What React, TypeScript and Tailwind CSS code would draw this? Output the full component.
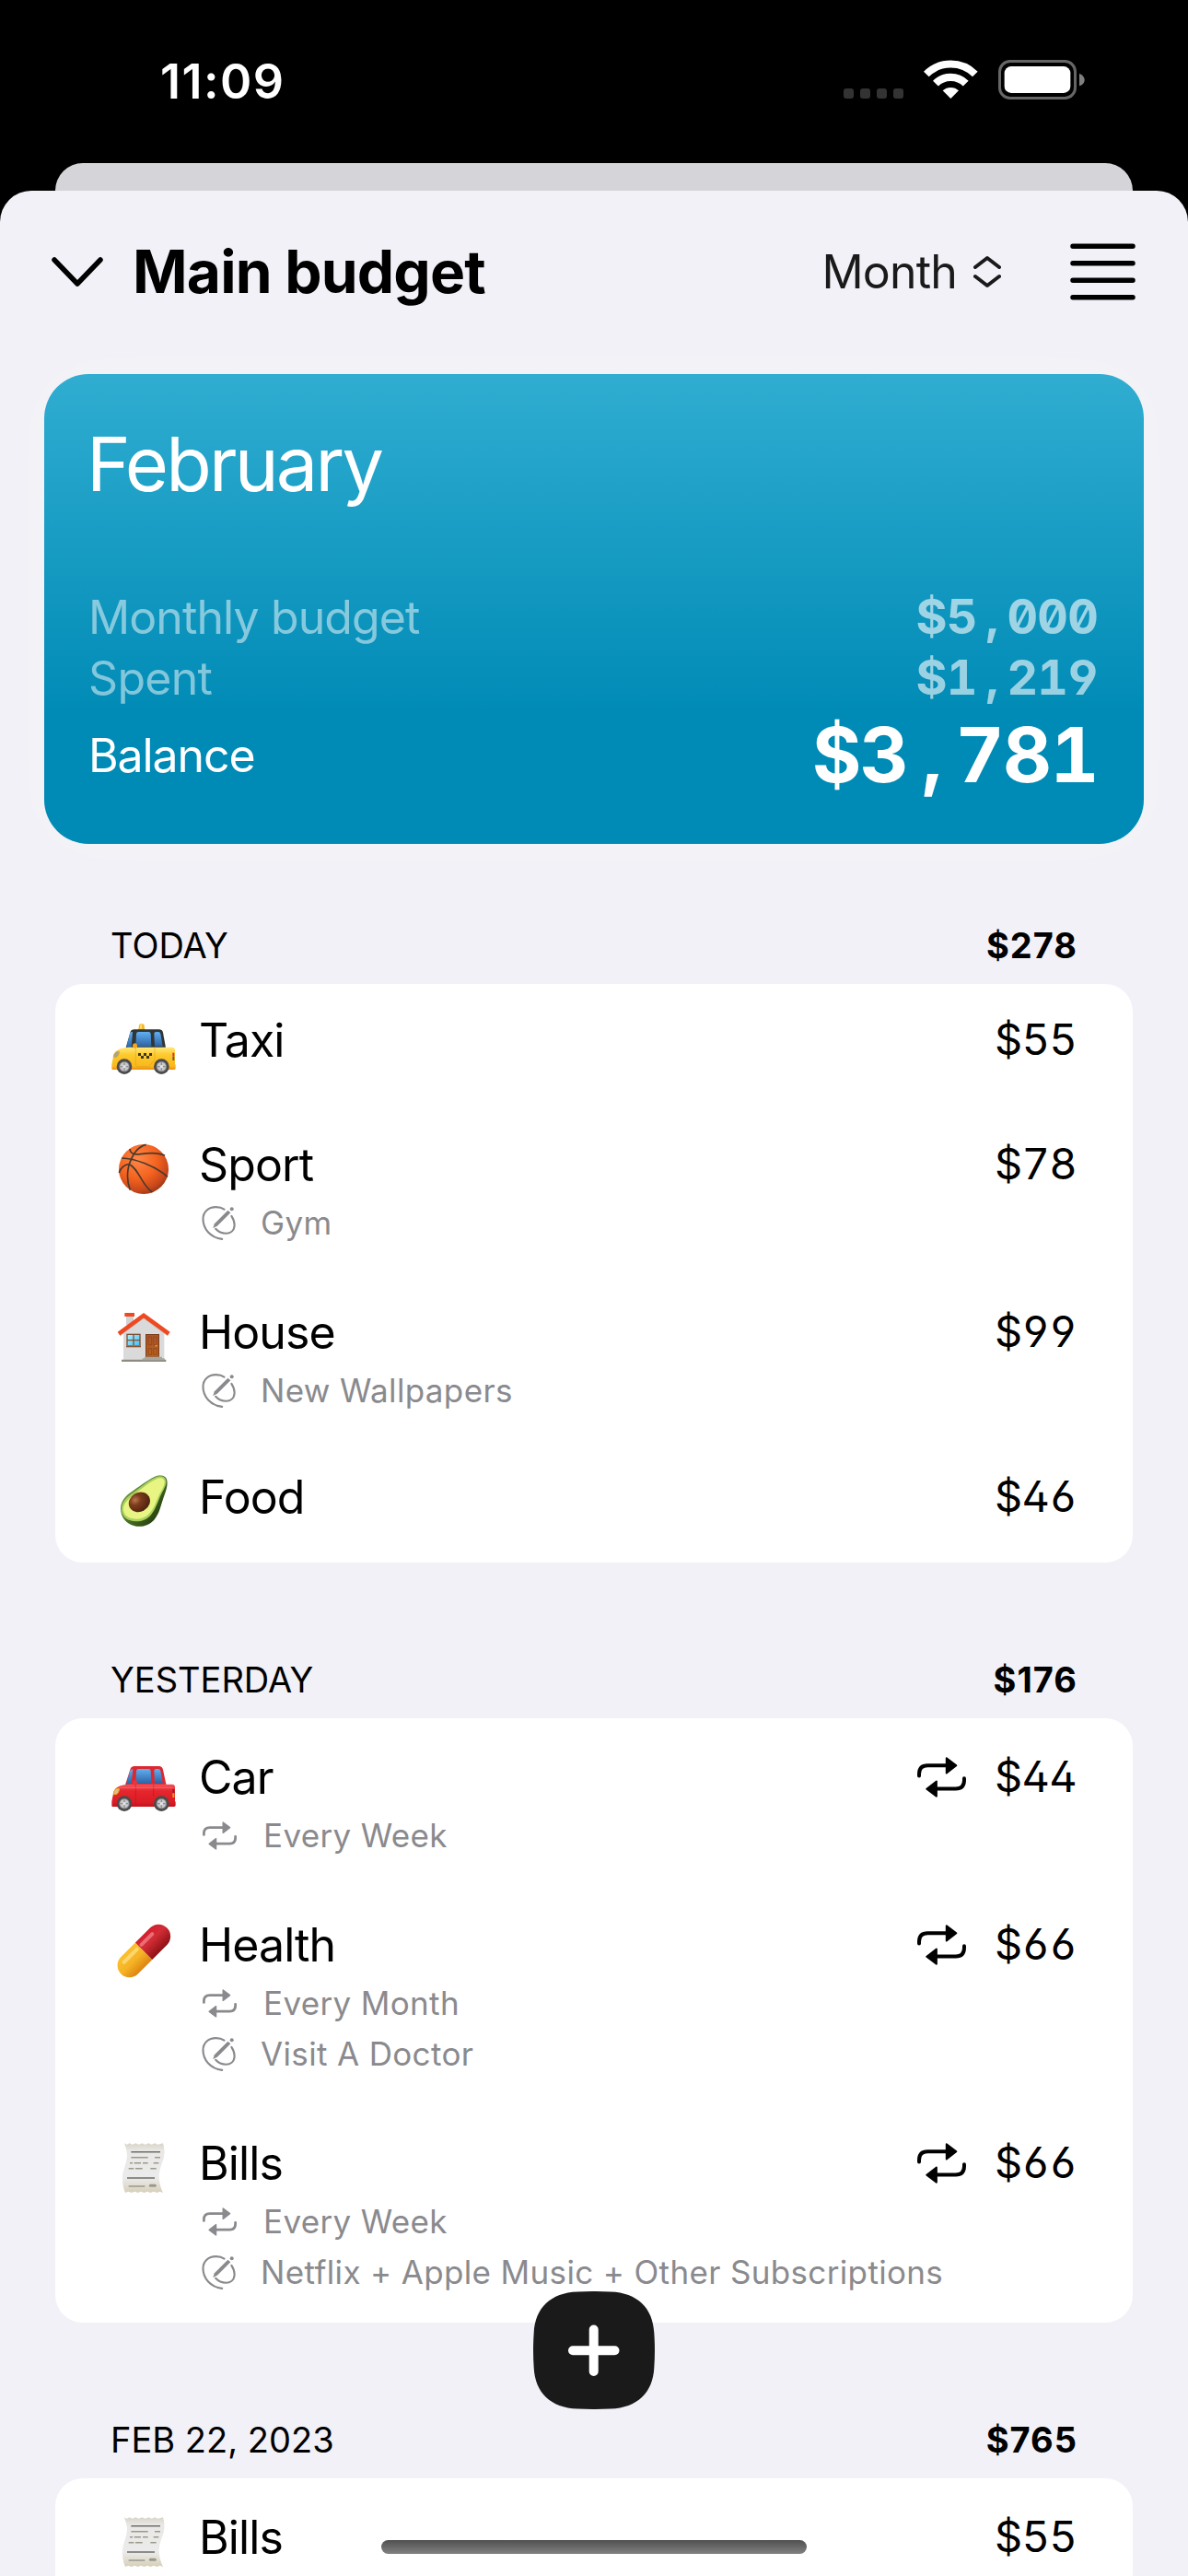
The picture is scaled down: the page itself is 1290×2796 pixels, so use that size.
import React from 'react';

interface Expense {
  icon: React.ReactNode;
  name: string;
  amount: string;
  repeat?: string;
  note?: string;
  compact?: boolean;
}

interface ExpenseGroup {
  title: string;
  total: string;
  items: Expense[];
}

const RepeatIcon: React.FC<{ className: string }> = ({ className }) => (
  <svg viewBox="288 377 160 133" className={className} fill="none" stroke="currentColor" strokeWidth="12" strokeLinecap="round" strokeLinejoin="round">
    <path d="M294 439V433Q294 405 322 405H385" />
    <path d="M442 447V453Q442 481 414 481H350" />
    <path d="M384 381L416 405L384 430Z" fill="currentColor" strokeWidth="6" />
    <path d="M351 457L319 482L351 506Z" fill="currentColor" strokeWidth="6" />
  </svg>
);

const NoteIcon: React.FC<{ className: string }> = ({ className }) => (
  <svg viewBox="357 275 110 112" className={className} fill="none" stroke="currentColor" strokeWidth="6.500" strokeLinecap="round">
    <path d="M423 383.500C385 379 360.500 350 360.500 318C360.500 294 378 278.500 403 278.500C413 278.500 423 281 430 286" />
    <path d="M454 308C461 319 465 330 463.500 341C462 357 450 365 436 365C422 365 410 359 402 350" />
    <path d="M393 348L398 333L442 289L451 297L407 341Z" fill="currentColor" stroke="none" />
    <circle cx="455" cy="285" r="6" fill="currentColor" stroke="none" />
  </svg>
);

const Wheel: React.FC<{ cx: number }> = ({ cx }) => (
  <g>
    <circle cx={cx} cy="233" r="25" fill="#4a4a4c" />
    <circle cx={cx} cy="233" r="17" fill="#8d8d90" />
    <circle cx={cx} cy="233" r="14" fill="#c9c9cc" />
    <path d={`M${cx - 13} 233h26M${cx} 220v26`} stroke="#8d8d90" strokeWidth="4" />
    <circle cx={cx} cy="233" r="5" fill="#e6e6e8" />
  </g>
);

const TaxiIcon = () => (
  <svg viewBox="60 57 216 216" className="size-[72px]">
    <defs>
      <linearGradient id="taxiBody" x1="0" y1="0" x2="0" y2="1">
        <stop offset="0" stopColor="#ffe97a" />
        <stop offset="0.35" stopColor="#fdc92b" />
        <stop offset="0.85" stopColor="#f9b81c" />
        <stop offset="1" stopColor="#f08a12" />
      </linearGradient>
      <linearGradient id="carGlass" x1="0" y1="0" x2="0" y2="1">
        <stop offset="0" stopColor="#5fb0f2" />
        <stop offset="1" stopColor="#2d62a3" />
      </linearGradient>
    </defs>
    <path d="M150 114L154 97Q155 94 161 94Q168 94 169 97L172 114Z" fill="#f4b31f" />
    <path d="M157 96h6v14h-8z" fill="#ffdc6b" />
    <path d="M110 172L124 122Q127 112 138 112H218Q228 112 231 122L240 172Z" fill="#323536" />
    <path d="M111 171L124 124Q126 119 132 120L128 171Z" fill="url(#carGlass)" />
    <path d="M144 126Q145 120 151 120H184Q190 120 191 126L193 168H142Z" fill="url(#carGlass)" />
    <path d="M202 126Q202 120 208 120H216Q221 120 223 126L230 167H204Z" fill="url(#carGlass)" />
    <path d="M64 238V226L70 196Q74 181 92 175Q102 171 120 170H262Q270 171 270 180V224L272 228V239Q271 243 266 243H66Q64 243 64 238Z" fill="url(#taxiBody)" />
    <path d="M142 172V226Q142 233 149 233H184Q188 233 190 227L204 210V172" fill="none" stroke="#d99a18" strokeWidth="1.5" />
    <path d="M70 200Q72 184 88 183Q90 190 84 199Q78 205 70 203Z" fill="#98a7a0" stroke="#f9a41a" strokeWidth="3" />
    <path d="M262 188h6v10h-6z" fill="#e0323b" />
    <path d="M262 199h6v14h-6z" fill="#8c4a4a" />
    <path d="M150 189h9v9h-9zM168 189h9v9h-9zM186 189h9v9h-9zM159 198h9v9h-9zM177 198h9v9h-9z" fill="#3b3524" />
    <path d="M132 163Q133 157 141 157Q147 158 147 165V171Q140 175 133 172Z" fill="#f0a71f" />
    <Wheel cx={105} />
    <Wheel cx={226} />
  </svg>
);

const BallIcon = () => (
  <svg viewBox="60 462 216 216" className="size-[72px]">
    <defs>
      <radialGradient id="ball" cx="0.38" cy="0.3" r="0.78">
        <stop offset="0" stopColor="#ff8748" />
        <stop offset="0.5" stopColor="#f4631f" />
        <stop offset="0.8" stopColor="#c9481b" />
        <stop offset="1" stopColor="#8a3116" />
      </radialGradient>
    </defs>
    <circle cx="168" cy="567" r="81" fill="url(#ball)" />
    <g fill="none" stroke="#4b3a2c" strokeWidth="5">
      <path d="M176 487C148 494 129 523 119 558C112 590 116 615 124 635" />
      <path d="M123 501C124 516 136 521 158 518C190 513 215 512 237 523" />
      <path d="M96 531C140 532 205 556 246 592" />
      <path d="M88 579C93 563 106 552 119 551C136 556 148 578 160 598C172 618 182 632 196 642" />
    </g>
  </svg>
);

const HouseIcon = () => (
  <svg viewBox="60 48 216 216" className="size-[72px]">
    <defs>
      <linearGradient id="door" x1="0" y1="0" x2="0" y2="1">
        <stop offset="0" stopColor="#a9552a" />
        <stop offset="1" stopColor="#b8601f" />
      </linearGradient>
      <linearGradient id="pane" x1="0" y1="0" x2="1" y2="1">
        <stop offset="0" stopColor="#a8ecff" />
        <stop offset="1" stopColor="#4cc0f0" />
      </linearGradient>
    </defs>
    <path d="M111 84h24v30h-24z" fill="#d3d3d5" />
    <path d="M102 140L168 88L235 140V228H102Z" fill="#dadadb" />
    <path d="M106 75h32v12h-32z" fill="#ee4a20" />
    <path d="M83 137L168 75L254 137L246 149L168 92L91 149Z" fill="#ee4a20" />
    <path d="M92 149L168 93L245 149" fill="none" stroke="#bdbcbf" strokeWidth="2" />
    <path d="M112 143h46v38h-46z" fill="#7d4f35" />
    <path d="M116 147h17v15h-17zM137 147h17v15h-17zM116 166h17v14h-17zM137 166h17v14h-17z" fill="url(#pane)" />
    <path d="M111 181h48v6h-48z" fill="#8a5638" />
    <path d="M96 227h145v7h-145z" fill="#8f8b82" />
    <path d="M171 218h57v5h8v6h-72v-6h7z" fill="#a9a69e" />
    <path d="M174 144h45v74h-45z" fill="#7a3c1c" />
    <path d="M177 147h39v70h-39z" fill="url(#door)" />
    <path d="M183 153h11v26h-11zM200 153h11v26h-11zM183 191h11v20h-11zM200 191h11v20h-11z" fill="none" stroke="#8a4218" strokeWidth="2" />
    <circle cx="209" cy="182" r="2.5" fill="#f5b62e" />
  </svg>
);

const AvocadoIcon = () => (
  <svg viewBox="60 585 216 216" className="size-[72px]">
    <defs>
      <radialGradient id="pit" cx="0.38" cy="0.3" r="0.75">
        <stop offset="0" stopColor="#b9764f" />
        <stop offset="0.35" stopColor="#7d3c1b" />
        <stop offset="1" stopColor="#4a200e" />
      </radialGradient>
      <linearGradient id="skin" x1="0.2" y1="0.2" x2="0.9" y2="0.8">
        <stop offset="0" stopColor="#6f9a3a" />
        <stop offset="1" stopColor="#1f3a0c" />
      </linearGradient>
    </defs>
    <path d="M244 620C247 640 240 655 233 676C224 702 219 730 202 749C186 767 160 775 136 768C112 762 93 742 93 712C94 690 104 676 124 661C150 643 180 620 203 609C223 601 240 604 244 620Z" fill="url(#skin)" />
    <path d="M241 622C243 637 232 651 222 672C212 696 206 716 190 735C172 754 145 758 122 750C104 744 95 730 96 711C97 693 108 679 127 665C152 647 180 622 205 611C224 603 238 607 241 622Z" fill="#a9d061" />
    <path d="M236 624C237 637 227 651 217 671C207 694 200 714 186 729C170 746 146 750 125 743C109 738 101 727 102 711C103 697 113 685 131 671C156 652 184 627 207 617C224 609 234 612 236 624Z" fill="#e8f582" />
    <ellipse cx="154" cy="691" rx="36" ry="31" transform="rotate(-30 154 691)" fill="url(#pit)" />
  </svg>
);

const CarIcon = () => (
  <svg viewBox="60 57 216 216" className="size-[72px]">
    <defs>
      <linearGradient id="carBody" x1="0" y1="0" x2="0" y2="1">
        <stop offset="0" stopColor="#f2565c" />
        <stop offset="0.3" stopColor="#e6252c" />
        <stop offset="0.8" stopColor="#dc1c25" />
        <stop offset="1" stopColor="#c2121c" />
      </linearGradient>
    </defs>
    <path d="M108 172L124 122Q127 111 138 111H218Q228 111 231 122L242 174Z" fill="#dd2830" />
    <path d="M111 170L124 126Q126 121 133 121L128 168Z" fill="url(#carGlass)" />
    <path d="M144 126Q145 120 151 120H184Q190 120 191 126L193 168H142Z" fill="url(#carGlass)" />
    <path d="M202 126Q202 120 208 120H216Q221 120 223 126L230 167H204Z" fill="url(#carGlass)" />
    <path d="M64 238V226L70 196Q74 181 92 175Q102 171 120 170H262Q270 171 270 180V224L272 228V239Q271 243 266 243H66Q64 243 64 238Z" fill="url(#carBody)" />
    <path d="M142 172V237M200 172V210" fill="none" stroke="#b3131d" strokeWidth="1.5" />
    <path d="M90 181H262" stroke="#f47a7d" strokeWidth="2" />
    <path d="M70 200Q72 184 88 183Q90 190 84 199Q78 205 70 203Z" fill="#d9c08a" stroke="#f0a21a" strokeWidth="3" />
    <path d="M262 186h6v12h-6z" fill="#8d2030" />
    <path d="M262 199h6v14h-6z" fill="#e8a01f" />
    <path d="M132 163Q133 157 141 157Q147 158 147 165V171Q140 175 133 172Z" fill="#e8343b" />
    <Wheel cx={105} />
    <Wheel cx={226} />
  </svg>
);

const PillIcon = () => (
  <svg viewBox="60 603 216 216" className="size-[72px]">
    <defs>
      <linearGradient id="pillRed" x1="0" y1="0" x2="0" y2="1">
        <stop offset="0" stopColor="#d3202e" />
        <stop offset="0.4" stopColor="#d22d36" />
        <stop offset="1" stopColor="#8f1114" />
      </linearGradient>
      <linearGradient id="pillYellow" x1="0" y1="0" x2="0" y2="1">
        <stop offset="0" stopColor="#fbc02d" />
        <stop offset="0.5" stopColor="#f6b325" />
        <stop offset="1" stopColor="#dd8410" />
      </linearGradient>
    </defs>
    <g transform="translate(169 712.500) rotate(-45)">
      <path d="M-1 -39H-67A39 39 0 0 0 -67 39H-1Z" fill="url(#pillYellow)" />
      <path d="M-1 -39H67A39 39 0 0 1 67 39H-1Z" fill="url(#pillRed)" />
      <path d="M-72 -20H-12" stroke="#ffe08a" strokeWidth="12" strokeLinecap="round" opacity="0.75" />
      <path d="M8 -20H58" stroke="#f3838c" strokeWidth="12" strokeLinecap="round" opacity="0.75" />
    </g>
  </svg>
);

const ReceiptIcon = () => (
  <svg viewBox="60 54 216 216" className="size-[72px]">
    <defs>
      <linearGradient id="paper" x1="0" y1="0" x2="0" y2="1">
        <stop offset="0" stopColor="#d8d4c8" />
        <stop offset="0.15" stopColor="#e9e8e6" />
        <stop offset="0.7" stopColor="#ebebeb" />
        <stop offset="1" stopColor="#d6cfb8" />
      </linearGradient>
    </defs>
    <path d="M105 79L113 83L122 79L131 83L142 79L152 83L163 79L173 83L184 79L194 83L204 79L214 83L231 79C236 94 237 110 233 128C227 147 220 162 218 185C218 207 224 225 231 240L221 236L211 240L201 236L190 240L180 236L170 240L159 236L149 240L139 236L128 240L118 236L108 240C101 225 98 203 99 185C101 165 112 145 114 120C114 103 109 93 105 79Z" fill="url(#paper)" />
    <g fill="none" strokeWidth="4.500">
      <path d="M127 107H222M114 192H204" stroke="#6f6e68" />
      <path d="M127 125H182M204 125H222M123 143H132M137 143H159M165 143H182M200 143H217M119 161H136M141 161H164M190 161H209M119 219H172" stroke="#9b998b" />
      <path d="M190 217H205" stroke="#9b998b" strokeWidth="9" strokeLinecap="round" />
    </g>
  </svg>
);

const groups: ExpenseGroup[] = [
  {
    title: 'TODAY',
    total: '$278',
    items: [
      { icon: <TaxiIcon />, name: 'Taxi', amount: '$55', compact: true },
      { icon: <BallIcon />, name: 'Sport', amount: '$78', note: 'Gym' },
      { icon: <HouseIcon />, name: 'House', amount: '$99', note: 'New Wallpapers' },
      { icon: <AvocadoIcon />, name: 'Food', amount: '$46', compact: true }
    ]
  },
  {
    title: 'YESTERDAY',
    total: '$176',
    items: [
      { icon: <CarIcon />, name: 'Car', amount: '$44', repeat: 'Every Week' },
      { icon: <PillIcon />, name: 'Health', amount: '$66', repeat: 'Every Month', note: 'Visit A Doctor' },
      {
        icon: <ReceiptIcon />,
        name: 'Bills',
        amount: '$66',
        repeat: 'Every Week',
        note: 'Netflix + Apple Music + Other Subscriptions'
      }
    ]
  },
  {
    title: 'FEB 22, 2023',
    total: '$765',
    items: [{ icon: <ReceiptIcon />, name: 'Bills', amount: '$55' }]
  }
];

const StatusBar = () => (
  <div className="flex h-[177px] shrink-0 items-start justify-between pl-[174px] pr-[112px] pt-[58px] text-white">
    <span className="text-[52px] font-semibold leading-[62px] tracking-[1.5px]">11:09</span>
    <svg viewBox="198 75 786 129" className="mt-[7px] h-[43px] w-[262px]">
      <g fill="#333333">
        <rect x="198" y="168" width="33" height="33" rx="9" />
        <rect x="252" y="168" width="33" height="33" rx="9" />
        <rect x="306" y="168" width="33" height="33" rx="9" />
        <rect x="360" y="168" width="33" height="33" rx="9" />
      </g>
      <path d="M467.500 121.500A112.500 112.500 0 0 1 626.500 121.500" fill="none" stroke="white" strokeWidth="24" />
      <path d="M497.900 151.900A69.500 69.500 0 0 1 596.100 151.900" fill="none" stroke="white" strokeWidth="25" />
      <path d="M547 201L521 175A38 38 0 0 1 573 175Z" fill="white" />
      <rect x="706.500" y="79.500" width="246" height="120" rx="34" fill="none" stroke="#666666" strokeWidth="9" />
      <rect x="722" y="96" width="215" height="87" rx="22" fill="white" />
      <path d="M966 119C978 124 983 132 983 140C983 148 978 156 966 160Z" fill="#808080" />
    </svg>
  </div>
);

const Header = () => (
  <div className="flex h-[176px] items-center pl-[56px] pr-[57px]">
    <svg viewBox="0 0 56 33" className="h-[33px] w-[56px]" fill="none" stroke="black" strokeWidth="5.500" strokeLinecap="round" strokeLinejoin="round">
      <path d="M3 3L28 29L53 3" />
    </svg>
    <h1 className="ml-[32px] text-[64px] font-bold leading-[78px] tracking-[-0.8px]">Main budget</h1>
    <span className="ml-auto text-[50px] leading-[60px] tracking-[-0.8px] text-[#1a1a1a]">Month</span>
    <svg viewBox="0 0 30 36" className="ml-[18px] h-[36px] w-[30px]" fill="none" stroke="#1a1a1a" strokeWidth="4" strokeLinecap="round" strokeLinejoin="round">
      <path d="M2 13L15 3L28 13M2 23L15 33L28 23" />
    </svg>
    <svg viewBox="0 0 71 62" className="ml-[75px] h-[62px] w-[71px]" stroke="black" strokeWidth="5.500" strokeLinecap="round">
      <path d="M3 3.250H68M3 21.750H68M3 40.250H68M3 58.750H68" />
    </svg>
  </div>
);

// Tabular digits; the comma takes a full digit cell as in a monospaced face
const MonoAmount: React.FC<{ value: string; className: string }> = ({ value, className }) => {
  const [head, tail] = value.split(',');

  return (
    <span className={`[font-feature-settings:'tnum','zero','cv04'] ${className}`}>
      {head}
      <span className="inline-block w-[0.635em] text-center">,</span>
      {tail}
    </span>
  );
};

const BudgetCard = () => (
  <div className="mx-[48px] mt-[23px] h-[510px] rounded-[48px] bg-[linear-gradient(to_bottom,#30add1_0%,#008bb6_72%)] pl-[48px] pr-[50px] pt-[49px] text-white shadow-[0_0_60px_rgba(255,255,255,0.25)]">
    <h2 className="-ml-[2px] text-[81px] leading-[98px] tracking-[-2.8px]">February</h2>
    <div className="mt-[84px] flex items-baseline justify-between leading-[65px]">
      <span className="text-[50px] tracking-[-0.9px] opacity-50">Monthly budget</span>
      <MonoAmount value="$5,000" className="text-[52px] font-bold tracking-[-0.8px] opacity-60" />
    </div>
    <div className="flex items-baseline justify-between leading-[65px]">
      <span className="text-[50px] tracking-[-0.7px] opacity-50">Spent</span>
      <MonoAmount value="$1,219" className="text-[52px] font-bold tracking-[-0.8px] opacity-60" />
    </div>
    <div className="flex items-center justify-between leading-[102px]">
      <span className="text-[50px] tracking-[-1.1px]">Balance</span>
      <MonoAmount value="$3,781" className="text-[82px] font-bold tracking-[-1.5px]" />
    </div>
  </div>
);

const ExpenseRow: React.FC<{ item: Expense }> = ({ item }) => {
  const hasDetails = Boolean(item.repeat || item.note);

  return (
    <div className={`flex items-start pl-[60px] pr-[61px] ${item.compact ? 'h-[132px] pt-[31px]' : 'pt-[34px] pb-[27px]'}`}>
      {item.icon}
      <div className="ml-[24px] flex-1">
        <div className="flex items-center">
          <span className="text-[50px] leading-[61px] tracking-[-0.9px]">{item.name}</span>
          {item.repeat && <RepeatIcon className="mb-[2px] ml-auto h-[44px] w-[53px]" />}
          <span
            className={`mb-[4px] text-right text-[47px] leading-[55px] tracking-[-0.7px] [font-feature-settings:'tnum','cv02','cv03','cv04'] ${
              item.repeat ? 'ml-[31px]' : 'ml-auto'
            }`}
          >
            {item.amount}
          </span>
        </div>
        {hasDetails && (
          <div className="mt-[5px] text-[35px] leading-[55px] tracking-[0.35px] text-[#8a8a8e]">
            {item.repeat && (
              <div className="flex items-center pl-[4px]">
                <RepeatIcon className="h-[31px] w-[37px]" />
                <span className="ml-[29px]">{item.repeat}</span>
              </div>
            )}
            {item.note && (
              <div className="flex items-center pl-[3px]">
                <NoteIcon className="h-[37px] w-[37px]" />
                <span className="ml-[27px]">{item.note}</span>
              </div>
            )}
          </div>
        )}
      </div>
    </div>
  );
};

const ExpenseSection: React.FC<{ group: ExpenseGroup }> = ({ group }) => (
  <section>
    <div className="flex items-center justify-between pb-[19px] pl-[60px] pr-[60px] text-[38px] leading-[45px]">
      <span>{group.title}</span>
      <span className="font-bold tracking-[1px]">{group.total}</span>
    </div>
    <div className="rounded-[30px] bg-white">
      {group.items.map((item, index) => (
        <ExpenseRow key={index} item={item} />
      ))}
    </div>
  </section>
);

const App: React.FC = () => {
  return (
    <div className="relative flex h-[2796px] w-[1290px] flex-col overflow-hidden bg-black font-['Inter',sans-serif] text-black">
      <StatusBar />
      <div className="mx-[60px] h-[30px] shrink-0 rounded-t-[30px] bg-[#d5d4d9]" />
      <div className="flex-1 overflow-hidden rounded-t-[34px] bg-[#f2f1f7]">
        <Header />
        <BudgetCard />
        <div className="mx-[60px] mt-[88px] flex flex-col gap-[105px]">
          {groups.map((group) => (
            <ExpenseSection key={group.title} group={group} />
          ))}
        </div>
      </div>

      {/* Add expense button */}
      <button className="absolute left-[579px] top-[2487px] h-[128px] w-[132px]" aria-label="Add expense">
        <svg viewBox="0 0 132 128" className="h-full w-full">
          <path
            d="M48 0.500C60 -0.170 72 -0.170 84 0.500C113 1.500 130 18 131.300 45C132.200 58 132.200 70 131.300 83C130 110 113 126.500 84 127.500C72 128.170 60 128.170 48 127.500C19 126.500 2 110 0.700 83C-0.200 70 -0.200 58 0.700 45C2 18 19 1.500 48 0.500Z"
            fill="#1a1a1a"
          />
          <path d="M43 64.300H88.500M65.700 41.500V87" stroke="white" strokeWidth="10" strokeLinecap="round" />
        </svg>
      </button>

      {/* Home indicator */}
      <div className="absolute left-[414px] top-[2757px] h-[15px] w-[462px] rounded-full bg-linear-to-b from-[#505050] to-[#828282]" />
    </div>
  );
};

export default App;
